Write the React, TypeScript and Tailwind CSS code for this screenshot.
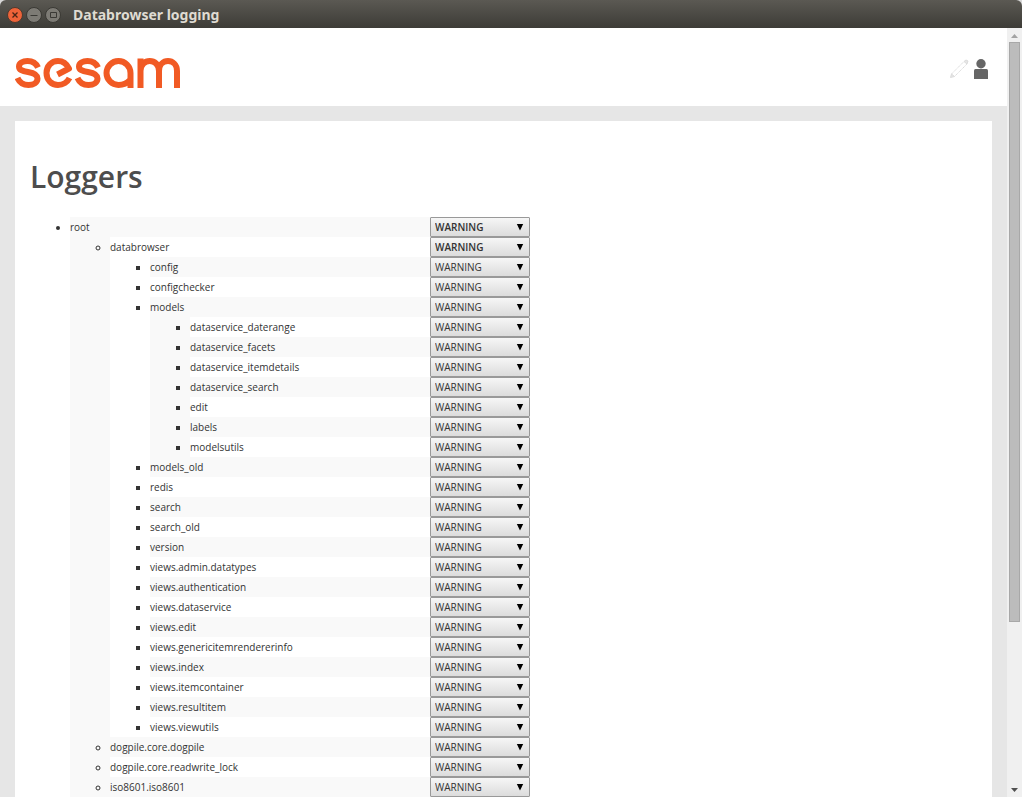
import React from "react";

type Logger = { name: string; bold?: boolean; children?: Logger[] };

const leaf = (...names: string[]): Logger[] => names.map((name) => ({ name }));

const tree: Logger[] = [
  {
    name: "root",
    bold: true,
    children: [
      {
        name: "databrowser",
        bold: true,
        children: [
          ...leaf("config", "configchecker"),
          {
            name: "models",
            children: leaf(
              "dataservice_daterange",
              "dataservice_facets",
              "dataservice_itemdetails",
              "dataservice_search",
              "edit",
              "labels",
              "modelsutils",
            ),
          },
          ...leaf(
            "models_old",
            "redis",
            "search",
            "search_old",
            "version",
            "views.admin.datatypes",
            "views.authentication",
            "views.dataservice",
            "views.edit",
            "views.genericitemrendererinfo",
            "views.index",
            "views.itemcontainer",
            "views.resultitem",
            "views.viewutils",
          ),
        ],
      },
      ...leaf("dogpile.core.dogpile", "dogpile.core.readwrite_lock", "iso8601.iso8601"),
    ],
  },
];

const levels = ["DEBUG", "INFO", "WARNING", "ERROR", "CRITICAL"];
const markers = ["list-disc", "list-[circle]", "list-[square]", "list-[square]"];

const countRows = (items: Logger[]): number =>
  items.reduce((n, item) => n + 1 + countRows(item.children ?? []), 0);

function LoggerList({ items, depth, start, path }: { items: Logger[]; depth: number; start: number; path: string }) {
  return (
    <ul className={`pl-10 ${markers[depth]}`}>
      {items.map((item, i) => {
        const row = start + countRows(items.slice(0, i));
        const id = `${path}-${item.name}`;
        return (
          <li key={id} className={row % 2 === 0 ? "bg-[#f9f9f9]" : "bg-white"}>
            <label htmlFor={id}>{item.name}</label>
            <span className="relative float-right">
              <select
                id={id}
                defaultValue="WARNING"
                className={`block h-5 w-[100px] appearance-none rounded-[1px] border border-[#999] bg-linear-to-b from-[#f6f6f6] to-[#dcdcdc] pl-1 text-[10px] leading-4 text-[#333] ${item.bold ? "font-semibold" : ""}`}
              >
                {levels.map((level) => (
                  <option key={level}>{level}</option>
                ))}
              </select>
              <svg className="pointer-events-none absolute top-[7px] right-1.5" width="8" height="7" aria-hidden="true">
                <path d="M.8 0h6.400L4 6.500z" fill="#000" />
              </svg>
            </span>
            {item.children && <LoggerList items={item.children} depth={depth + 1} start={row + 1} path={id} />}
          </li>
        );
      })}
    </ul>
  );
}

function TitleBar() {
  return (
    <header className="flex h-7 shrink-0 items-center rounded-t-md bg-linear-to-b from-[#5b5953] to-[#3d3c37] pt-px pl-[7px]">
      <div className="flex gap-[3px]">
        <button aria-label="Close" className="size-4 rounded-full">
          <svg width="16" height="16" viewBox="0 0 16 16">
            <circle cx="8" cy="8" r="7.5" fill="#ee6339" stroke="#4a3a30" />
            <path d="M5.500 5.500l5 5m0-5l-5 5" stroke="#4a2516" strokeWidth="1.3" />
          </svg>
        </button>
        <button aria-label="Minimize" className="size-4 rounded-full">
          <svg width="16" height="16" viewBox="0 0 16 16">
            <circle cx="8" cy="8" r="7.5" fill="#7d7b75" stroke="#3a3934" />
            <path d="M4.500 8.500h7" stroke="#3a3935" />
          </svg>
        </button>
        <button aria-label="Maximize" className="size-4 rounded-full">
          <svg width="16" height="16" viewBox="0 0 16 16">
            <circle cx="8" cy="8" r="7.5" fill="#7d7b75" stroke="#3a3934" />
            <path d="M5.500 5.500h6v5h-6z" fill="none" stroke="#3a3935" />
          </svg>
        </button>
      </div>
      <div className="pl-3 font-['Noto_Sans',sans-serif] text-sm font-bold text-[#dfdbd2]">Databrowser logging</div>
    </header>
  );
}

const letterS = "M38 67.500C36 63 32 61 27.500 61C22.500 61 19 63 19 66.500C19 70 22 71 28 72C34 73 37.500 74.500 37.500 78.500C37.500 82.500 33.500 85 28.500 85C23.500 85 19.500 82.500 17.500 78";

function Logo() {
  return (
    <svg width="166" height="32" viewBox="15 57 166 32" fill="none" stroke="#f15a24" strokeWidth="6" role="img" aria-label="sesam">
      <path d={letterS} />
      <path d="M57.500 74.500L69 68.500C66.500 63.500 62.500 61 58 61C51.500 61 46.500 66 46.500 73C46.500 80 51.500 85 58 85C63 85 67.500 82 69.500 78" strokeLinejoin="round" />
      <path d={letterS} transform="translate(60 0)" />
      <path d="M130.500 88V73A12 12 0 1 0 118.500 85Q125.500 85 130 80" />
      <path d="M140.500 88V58.500M140.500 71C140.500 57.700 159 57.700 159 71V88M159 71C159 57.700 177 57.700 177 71V88" />
    </svg>
  );
}

function ScrollBar() {
  return (
    <div className="flex w-[15px] shrink-0 flex-col items-center bg-[#f0f0f0]" aria-hidden="true">
      <svg width="15" height="14">
        <path d="M4 10h7L7.500 6z" fill="#a3a3a3" />
      </svg>
      <div className="h-[580px] w-[11px] border border-[#a8a8a8] bg-[#bcbcbc]" />
      <svg className="mt-auto" width="15" height="14">
        <path d="M4 5h7L7.500 9z" fill="#505050" />
      </svg>
    </div>
  );
}

export default function App() {
  return (
    <div className="flex h-screen flex-col overflow-hidden bg-[#d8d8d8] font-['Open_Sans',sans-serif] text-[10px] leading-5 text-[#333]">
      <TitleBar />
      <div className="flex min-h-0 flex-1">
        <div className="flex min-w-0 flex-1 flex-col overflow-hidden bg-[#e6e6e6]">
          <div className="flex h-[78px] shrink-0 items-start justify-between bg-white pr-[19px] pl-[15px]">
            <a href="#home" aria-label="Sesam home" className="pt-[29px]">
              <Logo />
            </a>
            <div className="flex items-center gap-[5px] pt-[31px]">
              <button aria-label="Edit">
                <svg width="20" height="20" viewBox="0 0 20 20" fill="none" stroke="#dcdcdc">
                  <path d="M2.500 15L15 2.500M5.500 17.500L18 5" strokeDasharray="1.400 .6" />
                  <path d="M2.500 15l-1 3.500 4-1zM15 2.500l2-1.500 2 1-1 3z" fill="#e6e6e6" />
                </svg>
              </button>
              <button aria-label="User">
                <svg width="14" height="20" viewBox="0 0 14 20" fill="#666">
                  <circle cx="7" cy="4.700" r="4.700" />
                  <path d="M0 20v-8.500Q0 10 1.500 10h11Q14 10 14 11.500V20z" />
                </svg>
              </button>
            </div>
          </div>
          <main className="m-[15px] mb-0 bg-white px-[15px] pt-9">
            <h1 className="mb-5 text-[30px] leading-10 font-semibold text-[#4d4d4d]">Loggers</h1>
            <div className="max-w-[500px]">
              <LoggerList items={tree} depth={0} start={0} path="logger" />
            </div>
          </main>
        </div>
        <ScrollBar />
      </div>
    </div>
  );
}
